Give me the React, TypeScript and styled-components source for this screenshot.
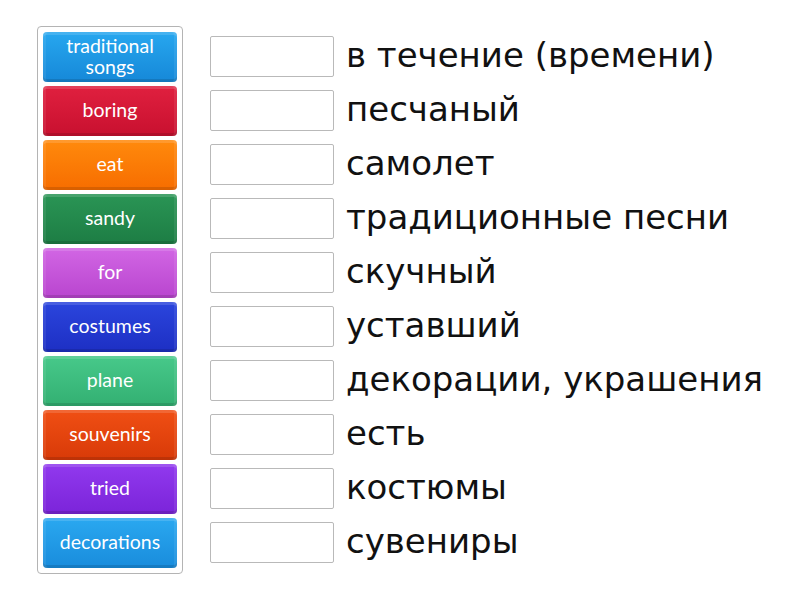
import React from "react";
import styled, { createGlobalStyle } from "styled-components";

const Global = createGlobalStyle`
  html, body { margin: 0; padding: 0; background: #fff; }
  body { width: 800px; height: 600px; overflow: hidden; }
`;

const Page = styled.div`
  display: flex;
  align-items: flex-start;
  padding: 26px 0 0 37px;
`;

const Panel = styled.div`
  display: flex;
  flex-direction: column;
  gap: 4px;
  width: 134px;
  padding: 5px 5px 5px 5px;
  border: 1px solid #b4b4b4;
  border-radius: 4px;
`;

const Tile = styled.div<{ $c1: string; $c2: string }>`
  box-sizing: border-box;
  height: 50px;
  padding-bottom: 3px;
  display: flex;
  align-items: center;
  justify-content: center;
  text-align: center;
  border-radius: 4px;
  color: #fff;
  font-family: Lato, "Open Sans", sans-serif;
  font-size: 19.5px;
  line-height: 21px;
  background: linear-gradient(to bottom, ${(p) => p.$c1}, ${(p) => p.$c2});
  box-shadow: inset 0 3px 0 rgba(255, 255, 255, 0.14), inset 3px 0 0 rgba(255, 255, 255, 0.08),
    inset -3px 0 0 rgba(255, 255, 255, 0.08), inset 0 -3px 0 rgba(0, 0, 0, 0.12);
`;

const Targets = styled.div`
  display: flex;
  flex-direction: column;
  gap: 4px;
  margin-left: 27px;
  padding-top: 5px;
`;

const Row = styled.div`
  height: 50px;
  display: flex;
  align-items: center;
  gap: 12px;
`;

const Slot = styled.div`
  box-sizing: border-box;
  width: 124px;
  height: 41px;
  border: 1px solid #b9b9b9;
  border-radius: 2px;
  background: #fff;
  flex: none;
`;

const Label = styled.div`
  font-family: "DejaVu Sans", Verdana, sans-serif;
  font-size: 34px;
  line-height: 40px;
  margin-top: -3px;
  color: #111;
  white-space: nowrap;
`;

const tiles: { t: React.ReactNode; c1: string; c2: string }[] = [
  { t: <>traditional<br />songs</>, c1: "#27a7ef", c2: "#1688d8" },
  { t: "boring", c1: "#e0203f", c2: "#c8102f" },
  { t: "eat", c1: "#ff8a0c", c2: "#f76d00" },
  { t: "sandy", c1: "#2a9555", c2: "#1d7d44" },
  { t: "for", c1: "#d266e4", c2: "#b945cf" },
  { t: "costumes", c1: "#2b45dd", c2: "#1d2fc4" },
  { t: "plane", c1: "#47c98a", c2: "#33b072" },
  { t: "souvenirs", c1: "#f04f14", c2: "#d83a08" },
  { t: "tried", c1: "#9139ee", c2: "#7b24d9" },
  { t: "decorations", c1: "#2aa8f0", c2: "#198cdc" },
];

const labels = [
  "в течение (времени)",
  "песчаный",
  "самолет",
  "традиционные песни",
  "скучный",
  "уставший",
  "декорации, украшения",
  "есть",
  "костюмы",
  "сувениры",
];

export default function App() {
  return (
    <>
      <Global />
      <Page>
        <Panel>
          {tiles.map((x, i) => (
            <Tile key={i} $c1={x.c1} $c2={x.c2}>
              <span>{x.t}</span>
            </Tile>
          ))}
        </Panel>
        <Targets>
          {labels.map((l, i) => (
            <Row key={i}>
              <Slot />
              <Label>{l}</Label>
            </Row>
          ))}
        </Targets>
      </Page>
    </>
  );
}
